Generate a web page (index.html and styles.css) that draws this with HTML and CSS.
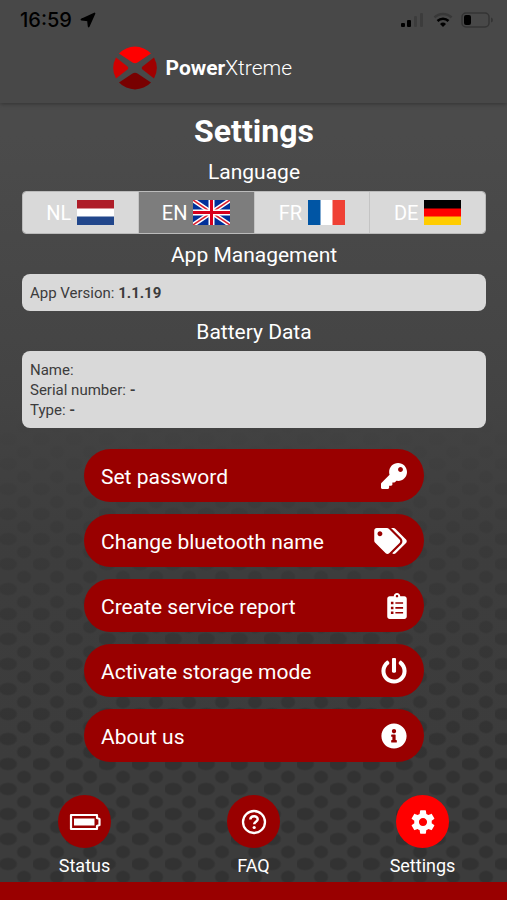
FILE: index.html
```html
<!DOCTYPE html>
<html lang="en">
<head>
<meta charset="UTF-8">
<meta name="viewport" content="width=device-width, initial-scale=1.0">
<title>PowerXtreme - Settings</title>
<link rel="stylesheet" href="styles.css">
</head>
<body>

<header class="header">
    <div class="statusbar">
        <span class="time">16:59</span>
        <svg class="location" width="16" height="16" viewBox="0 0 16 16"><path d="M14.500 1.500 1.500 7.500 8 8.300 8.700 14.500z" fill="#000" stroke="#000" stroke-width="1.800" stroke-linejoin="round"/></svg>
        <svg class="signal" width="24" height="16" viewBox="0 0 24 16">
            <rect x="0" y="11" width="4" height="4" rx="1"/>
            <rect x="6" y="8" width="4" height="7" rx="1"/>
            <rect x="13" y="4" width="3" height="11" rx="1" fill="#3c3c3c"/>
            <rect x="19" y="1" width="3" height="14" rx="1" fill="#3c3c3c"/>
        </svg>
        <svg class="wifi" width="20" height="16" viewBox="0 0 20 16" fill="none" stroke="#000" stroke-width="2.500">
            <path d="M1.500 5.500a12 12 0 0 1 17 0" stroke="#383838"/>
            <path d="M4.500 9a7.800 7.800 0 0 1 11 0"/>
            <path d="M10 15 7 12a4.300 4.300 0 0 1 6 0z" fill="#000" stroke="none"/>
        </svg>
        <svg class="battery" width="32" height="16" viewBox="0 0 32 16">
            <rect x="1" y="1" width="27" height="14" rx="4" fill="none" stroke="#343434" stroke-width="1.500"/>
            <rect x="3" y="3" width="7" height="10" rx="2"/>
            <path d="M30 5.500q2 .5 2 2.500t-2 2.500z" fill="#343434"/>
        </svg>
    </div>
    <div class="brand">
        <svg width="44" height="44" viewBox="0 0 44 44">
            <path d="M6 7.500A22 22 0 0 1 38 7.500L24.500 16.500Q22 18 19.500 16.500z" fill="#f00"/>
            <path d="M6 36.500A22 22 0 0 0 38 36.500L24.500 27.500Q22 26 19.500 27.500z" fill="#780000"/>
            <path d="M3 11.500A22 22 0 0 0 3 32.500L14.500 23.500Q16 22 14.500 20.500z" fill="#d00000"/>
            <path d="M41 11.500A22 22 0 0 1 41 32.500L29.500 23.500Q28 22 29.500 20.500z" fill="#a00000"/>
        </svg>
        <span class="brand-name"><b>Power</b>Xtreme</span>
    </div>
</header>

<main class="content">
    <h1>Settings</h1>

    <h2>Language</h2>
    <div class="languages">
        <button type="button">NL
            <svg class="flag" viewBox="0 0 37 25"><path d="M0 0h37v25H0z" fill="#fff"/><path d="M0 0h37v8.500H0z" fill="#ae1c28"/><path d="M0 16.500h37V25H0z" fill="#21468b"/></svg>
        </button>
        <button type="button" class="active">EN
            <svg class="flag" viewBox="0 0 37 25">
                <path d="M0 0h37v25H0z" fill="#00309a"/>
                <path d="M0 0l37 25M37 0L0 25" stroke="#fff" stroke-width="4.500"/>
                <path d="M0 0l37 25M37 0L0 25" stroke="#dc2030" stroke-width="1.500"/>
                <path d="M18.500 0v25M0 12.500h37" stroke="#fff" stroke-width="6"/>
                <path d="M18.500 0v25M0 12.500h37" stroke="#d8001c" stroke-width="3"/>
            </svg>
        </button>
        <button type="button">FR
            <svg class="flag" viewBox="0 0 37 25"><path d="M0 0h37v25H0z" fill="#fff"/><path d="M0 0h12.500v25H0z" fill="#0055a4"/><path d="M24.500 0H37v25H24.500z" fill="#ef4135"/></svg>
        </button>
        <button type="button">DE
            <svg class="flag" viewBox="0 0 37 25"><path d="M0 0h37v25H0z" fill="#000"/><path d="M0 8.500h37V25H0z" fill="#f00"/><path d="M0 16.500h37V25H0z" fill="#fc0"/></svg>
        </button>
    </div>

    <h2>App Management</h2>
    <div class="card">App Version: <b>1.1.19</b></div>

    <h2>Battery Data</h2>
    <div class="card">
        <div>Name:</div>
        <div>Serial number: <b>-</b></div>
        <div>Type: <b>-</b></div>
    </div>

    <div class="actions">
        <button type="button">Set password
            <svg width="26" height="26" viewBox="0 0 512 512"><path d="M512 176.001C512 273.203 433.202 352 336 352c-11.220 0-22.190-1.062-32.827-3.069l-24.012 27.014A23.999 23.999 0 0 1 261.223 384H224v40c0 13.255-10.745 24-24 24h-40v40c0 13.255-10.745 24-24 24H24c-13.255 0-24-10.745-24-24v-78.059c0-6.365 2.529-12.470 7.029-16.971l161.802-161.802C163.108 213.814 160 195.271 160 176 160 78.798 238.797.001 335.999 0 433.488-.001 512 78.511 512 176.001zM336 128c0 26.510 21.490 48 48 48s48-21.490 48-48-21.490-48-48-48-48 21.490-48 48z"/></svg>
        </button>
        <button type="button">Change bluetooth name
            <svg width="33" height="26" viewBox="0 0 640 512"><path d="M497.941 225.941L286.059 14.059A48 48 0 0 0 252.118 0H48C21.490 0 0 21.490 0 48v204.118a48 48 0 0 0 14.059 33.941l211.882 211.882c18.744 18.745 49.136 18.746 67.882 0l204.118-204.118c18.745-18.745 18.745-49.137 0-67.882zM112 160c-26.510 0-48-21.490-48-48s21.490-48 48-48 48 21.490 48 48-21.490 48-48 48zm513.941 133.823L421.823 497.941c-18.745 18.745-49.137 18.745-67.882 0l-.36-.36L527.640 323.522c16.999-16.999 26.360-39.600 26.360-63.640s-9.362-46.641-26.360-63.640L331.397 0h48.721a48 48 0 0 1 33.941 14.059l211.882 211.882c18.745 18.745 18.745 49.137 0 67.882z"/></svg>
        </button>
        <button type="button">Create service report
            <svg width="20" height="26" viewBox="0 0 384 512"><path fill-rule="evenodd" d="M336 64h-80c0-35.300-28.700-64-64-64s-64 28.700-64 64H48C21.500 64 0 85.500 0 112v352c0 26.500 21.500 48 48 48h288c26.500 0 48-21.500 48-48V112c0-26.500-21.500-48-48-48zM192 40c13.300 0 24 10.700 24 24s-10.700 24-24 24-24-10.700-24-24 10.700-24 24-24zM72 174h50v48H72zM160 182h152v32H160zM72 270h50v48H72zM160 278h152v32H160zM72 366h50v48H72zM160 374h152v32H160z"/></svg>
        </button>
        <button type="button">Activate storage mode
            <svg width="26" height="26" viewBox="0 0 512 512"><path d="M400 54.100c63 45 104 118.600 104 201.900 0 136.800-110.800 247.700-247.500 248C120 504.300 8.200 393 8 256.400 7.900 173.100 48.900 99.300 111.800 54.200c11.700-8.300 28-4.800 35 7.700L162.600 90c5.900 10.500 3.100 23.800-6.600 31-41.500 30.800-68 79.600-68 134.900-.1 92.300 74.500 168.100 168 168.100 91.600 0 168.600-74.200 168-169.100-.3-51.800-24.700-101.800-68.100-134-9.700-7.200-12.400-20.500-6.500-30.900l15.800-28.100c7-12.400 23.200-16.100 34.800-7.800zM296 264V24c0-13.300-10.700-24-24-24h-32c-13.300 0-24 10.700-24 24v240c0 13.300 10.700 24 24 24h32c13.300 0 24-10.700 24-24z"/></svg>
        </button>
        <button type="button">About us
            <svg width="26" height="26" viewBox="0 0 512 512"><path d="M256 8C119.043 8 8 119.083 8 256c0 136.997 111.043 248 248 248s248-111.003 248-248C504 119.083 392.957 8 256 8zm0 110c23.196 0 42 18.804 42 42s-18.804 42-42 42-42-18.804-42-42 18.804-42 42-42zm56 254c0 6.627-5.373 12-12 12h-88c-6.627 0-12-5.373-12-12v-24c0-6.627 5.373-12 12-12h12v-64h-12c-6.627 0-12-5.373-12-12v-24c0-6.627 5.373-12 12-12h64c6.627 0 12 5.373 12 12v100h12c6.627 0 12 5.373 12 12v24z"/></svg>
        </button>
    </div>
</main>

<nav class="tabs">
    <a href="#status">
        <span class="circle">
            <svg width="32" height="18" viewBox="0 0 32 18"><path d="M2 2h26v3l2.500 1v6L28 13v3H2z" fill="none" stroke="#fff" stroke-width="2.200" stroke-linejoin="round"/><path d="M5 5.500h20.500v7H5z" fill="#fff"/></svg>
        </span>
        Status
    </a>
    <a href="#faq">
        <span class="circle">
            <svg width="26" height="26" viewBox="0 0 26 26" fill="none" stroke="#fff"><circle cx="13" cy="13" r="11" stroke-width="2.300"/><path d="M9.300 10.500c.3-4.300 7.400-4.300 7.400-.2 0 2.500-3.500 2.500-3.500 5" stroke-width="2.500"/><circle cx="13.200" cy="18.500" r="1.600" fill="#fff" stroke="none"/></svg>
        </span>
        FAQ
    </a>
    <a href="#settings" class="current">
        <span class="circle">
            <svg width="28" height="28" viewBox="0 0 24 24" fill="#fff"><path d="M19.430 12.980c.04-.32.07-.64.07-.98s-.03-.66-.07-.98l2.110-1.650c.19-.15.24-.42.12-.64l-2-3.460c-.12-.22-.39-.3-.61-.22l-2.490 1c-.52-.4-1.080-.73-1.690-.98l-.38-2.650C14.460 2.180 14.250 2 14 2h-4c-.25 0-.46.18-.49.42l-.38 2.650c-.61.25-1.170.59-1.690.98l-2.490-1c-.23-.09-.49 0-.61.22l-2 3.460c-.13.22-.07.49.12.64l2.110 1.650c-.04.32-.07.65-.07.98s.03.66.07.98l-2.110 1.650c-.19.15-.24.42-.12.64l2 3.460c.12.22.39.3.61.22l2.490-1c.52.4 1.080.73 1.690.98l.38 2.650c.03.24.24.42.49.42h4c.25 0 .46-.18.49-.42l.38-2.650c.61-.25 1.170-.59 1.690-.98l2.490 1c.23.09.49 0 .61-.22l2-3.460c.12-.22.07-.49-.12-.64l-2.110-1.650zM12 15.500c-1.930 0-3.500-1.570-3.500-3.500s1.570-3.500 3.500-3.500 3.500 1.570 3.500 3.500-1.570 3.500-3.500 3.500z"/></svg>
        </span>
        Settings
    </a>
</nav>
<footer class="bottom"></footer>

</body>
</html>
```
FILE: styles.css
```css
* {
    box-sizing: border-box;
}
body {
    margin: 0;
    min-height: 100vh;
    display: flex;
    flex-direction: column;
    font-family: Roboto, sans-serif;
    color: #fff;
    /* fade over a mesh of wide and round dots */
    background:
        linear-gradient(#4b4b4b 15%, #434343 45%, rgba(62, 62, 62, 0.6) 60%, rgba(60, 60, 60, 0) 85%),
        radial-gradient(ellipse 10px 7px at 8px 14px, #323232 75%, transparent) 0 0 / 33px 25px,
        radial-gradient(ellipse 8px 7px at 24px 2px, #323232 75%, transparent) 0 0 / 33px 25px,
        radial-gradient(ellipse 8px 7px at 24px 27px, #323232 75%, transparent) 0 0 / 33px 25px,
        #3c3c3c;
}
button {
    font-family: inherit;
    color: #fff;
    border: none;
    cursor: pointer;
}
.header {
    height: 103px;
    background-color: #484848;
    box-shadow: 0 1px 4px #333;
}
.statusbar {
    display: flex;
    align-items: center;
    height: 40px;
    padding: 0 14px 0 20px;
    color: #000;
}
.time {
    font-family: Inter, sans-serif;
    font-size: 20px;
    font-weight: 500;
}
.location {
    margin-left: 8px;
}
.signal {
    margin-left: auto;
}
.wifi {
    margin: 0 8px;
}
.brand {
    display: flex;
    align-items: center;
    gap: 9px;
    width: 282px;
    margin: 6px auto 0;
}
.brand-name {
    font-size: 21px;
    font-weight: 300;
}
.brand-name b {
    font-weight: 700;
}
.content {
    flex: 1;
    padding: 8px 21px 0 22px;
}
h1 {
    margin: 0;
    font-size: 32px;
    line-height: 40px;
    text-align: center;
}
h2 {
    margin: 0;
    padding-top: 2px;
    font-size: 21px;
    font-weight: 400;
    line-height: 38px;
    text-align: center;
}
.languages {
    display: flex;
    height: 43px;
    border: 1px solid #bbb;
    border-radius: 4px;
    overflow: hidden;
}
.languages button {
    flex: 1;
    display: flex;
    align-items: center;
    justify-content: center;
    gap: 6px;
    padding: 0;
    font-size: 20px;
    background-color: #d9d9d9;
    border-right: 1px solid #c4c4c4;
}
.languages button:last-child {
    border-right: none;
}
.languages button.active {
    background-color: #7d7d7d;
}
.flag {
    width: 37px;
    height: 25px;
}
.card {
    padding: 9px 8px 8px;
    font-size: 15px;
    line-height: 20px;
    color: #3c3c3c;
    background-color: #d9d9d9;
    border-radius: 8px;
}
.actions {
    display: flex;
    flex-direction: column;
    gap: 12px;
    width: 340px;
    max-width: 100%;
    margin: 21px auto 0;
}
.actions button {
    display: flex;
    align-items: center;
    justify-content: space-between;
    height: 53px;
    padding: 2px 17px 0;
    font-size: 21px;
    background-color: #990000;
    border-radius: 27px;
}
.actions svg {
    margin-bottom: 2px;
    fill: #fff;
}
.tabs {
    display: flex;
    padding-bottom: 4px;
}
.tabs a {
    flex: 1;
    display: flex;
    flex-direction: column;
    align-items: center;
    gap: 6px;
    font-size: 18px;
    line-height: 24px;
    color: #fff;
    text-decoration: none;
}
.circle {
    display: flex;
    align-items: center;
    justify-content: center;
    width: 53px;
    height: 53px;
    border-radius: 50%;
    background-color: #990000;
}
.current .circle {
    background-color: #ff0000;
}
.bottom {
    height: 18px;
    background-color: #990000;
}
```
